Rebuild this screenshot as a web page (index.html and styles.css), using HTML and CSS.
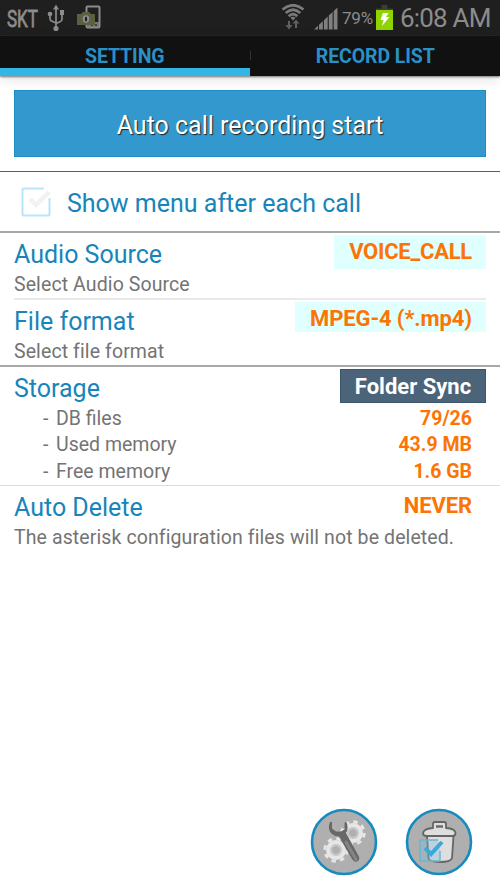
FILE: index.html
```html
<!DOCTYPE html>
<html lang="en">
<head>
    <meta charset="UTF-8">
    <meta name="viewport" content="width=device-width, initial-scale=1.0">
    <title>Call Recorder</title>
    <link rel="stylesheet" href="styles.css">
</head>
<body>

<!-- Status bar -->
<div class="status-bar">
    <span class="carrier">SKT</span>
    <svg class="usb" width="18" height="28" viewBox="0 0 18 28" fill="none" stroke="#8c8c8c" stroke-width="1.7">
        <path d="M9 4v20M3 11v3.500q0 2 2 2.800l4 1.700M15 9v6q0 2-2 2.800l-4 1.700"/>
        <path d="M9 .5l3 5H6z" fill="#8c8c8c" stroke="none"/>
        <circle cx="3" cy="10" r="2.300" fill="#8c8c8c" stroke="none"/>
        <path d="M13 6h4v5h-4z" fill="#8c8c8c" stroke="none"/>
        <circle cx="9" cy="24.500" r="2.600" fill="#8c8c8c" stroke="none"/>
    </svg>
    <svg class="capture" width="24" height="24" viewBox="0 0 24 24">
        <rect x="9.500" y="1.500" width="13" height="21" rx="1" fill="#1f1f1f" stroke="#8c8c8c" stroke-width="2"/>
        <path d="M10 17h12v5H10z" fill="#777"/>
        <path d="M14 20h2M18 20h2" stroke="#333" stroke-width="1.500"/>
        <path d="M0 9h4l2-2h6l2 2h4v11H0z" fill="#5c6041"/>
        <ellipse cx="9" cy="14" rx="3.300" ry="3.700" fill="#8f8f8f"/>
        <ellipse cx="9" cy="14" rx="1.200" ry="2.500" fill="#1f1f1f"/>
    </svg>
    <svg class="wifi" width="24" height="26" viewBox="0 0 24 26" fill="none" stroke="#7b7b7b" stroke-width="2.700">
        <path d="M1.500 5.500Q12-3 22.500 5.500M4.700 9Q12 2.500 19.300 9M7.700 12.300Q12 8 16.300 12.300"/>
        <path d="M9.500 13.800q2.500-2 5 0L12 16.500z" fill="#7b7b7b" stroke="none"/>
        <path d="M8 17v5M15 24v-6" stroke="#606060" stroke-width="2"/>
        <path d="M4.500 21h7L8 25.500zM11.500 19.500h7L15 15.500z" fill="#606060" stroke="none"/>
    </svg>
    <svg class="signal" width="24" height="23" viewBox="0 0 24 23" fill="#7f7f7f">
        <path d="M0 22.500l4-3.800v3.800zM5 17.800l3.800-3.600v8.300H5zM9.900 13.200l3.800-3.600v12.900H9.900zM14.800 8.600L18.600 5v17.500h-3.800zM19.700 4L23.500.4v22.100h-3.800z"/>
    </svg>
    <span class="percent">79%</span>
    <svg class="battery" width="17" height="25" viewBox="0 0 17 25">
        <path d="M5.500 0h6v3.500H17V25H0V3.500h5.500z" fill="#3d3d3d"/>
        <path d="M0 5h17v20H0z" fill="#8fd400"/>
        <path d="M7 8h5.500l-2.500 4h3.500L6 21l1.500-6H4.500z" fill="#fff"/>
    </svg>
    <span class="clock">6:08 AM</span>
</div>

<!-- Tabs -->
<div class="tabs">
    <div class="tab active">SETTING</div>
    <div class="tab-split"></div>
    <div class="tab">RECORD LIST</div>
</div>

<div class="start-area">
    <button class="start-button">Auto call recording start</button>
</div>

<div class="menu-row">
    <svg class="checkbox" width="30" height="30" viewBox="0 0 30 30" fill="none">
        <path d="M23 1.500H2.500q-1 0-1 1v25q0 1 1 1h25q1 0 1-1V11" stroke="#b9e6f6" stroke-width="2"/>
        <path d="M9 12l6 6L28 5" stroke="#f1f2f2" stroke-width="4.500"/>
    </svg>
    <span class="menu-label">Show menu after each call</span>
</div>

<!-- Settings -->
<div class="section audio">
    <div class="text">
        <div class="title">Audio Source</div>
        <div class="sub">Select Audio Source</div>
    </div>
    <div class="value voice">VOICE_CALL</div>
</div>
<div class="divider"></div>
<div class="section format">
    <div class="text">
        <div class="title">File format</div>
        <div class="sub">Select file format</div>
    </div>
    <div class="value mpeg">MPEG-4 (*.mp4)</div>
</div>

<div class="storage">
    <div class="storage-head">
        <div class="title">Storage</div>
        <button class="sync">Folder Sync</button>
    </div>
    <div class="info"><span class="dash">-</span><span>DB files</span><b>79/26</b></div>
    <div class="info"><span class="dash">-</span><span>Used memory</span><b>43.9 MB</b></div>
    <div class="info"><span class="dash">-</span><span>Free memory</span><b>1.6 GB</b></div>
</div>

<div class="section delete">
    <div class="text">
        <div class="title">Auto Delete</div>
        <div class="sub">The asterisk configuration files will not be deleted.</div>
    </div>
    <div class="value never">NEVER</div>
</div>

<!-- Bottom buttons -->
<div class="actions">
    <svg class="round" width="68" height="68" viewBox="0 0 68 68">
        <circle cx="34" cy="34" r="32" fill="#afafaf" stroke="#168bc0" stroke-width="2.600"/>
        <g fill="none" stroke="#e6e6e6">
            <circle cx="43" cy="25" r="7" stroke-width="6"/>
            <circle cx="43" cy="25" r="11.200" stroke-width="3" stroke-dasharray="4.400 4.400"/>
            <circle cx="26" cy="42" r="7" stroke-width="6"/>
            <circle cx="26" cy="42" r="11.200" stroke-width="3" stroke-dasharray="4.400 4.400"/>
        </g>
        <circle cx="43" cy="25" r="5" fill="none" stroke="#c5c5c5" stroke-width="2"/>
        <circle cx="26" cy="42" r="5" fill="none" stroke="#c5c5c5" stroke-width="2"/>
        <path d="M20 14q-3 8 2 12 3 2.500 7 2.500L42 51q2.500 4 5.500 2.300 3-2 1-5.500L36 25q3-4 .5-11l-2 .5v7l-3.500 2h-5l-4-3V14z" fill="#686868"/>
        <path d="M36 34l10 17.500" stroke="#858585" stroke-width="3" stroke-linecap="round"/>
    </svg>
    <svg class="round" width="68" height="68" viewBox="0 0 68 68">
        <circle cx="34" cy="34" r="32" fill="#afafaf" stroke="#168bc0" stroke-width="2.600"/>
        <path d="M22 28l1.500 22q.5 4 11.500 4t12-4l1.500-22z" fill="#dedede" stroke="#656565" stroke-width="1.800"/>
        <path d="M28 20v-4q0-2 2-2h9q2 0 2 2v4q9 .5 9.500 5 0 3-3 3h-26q-3.500 0-3.500-3 1-4.500 10-5z" fill="#dedede" stroke="#656565" stroke-width="1.800" stroke-linejoin="round"/>
        <path d="M31 18.500h7" stroke="#656565" stroke-width="2.400"/>
        <path d="M33 32H15v21h20V43" fill="#7dc1d9" fill-opacity=".35" stroke="#68b6d2" stroke-width="1.500"/>
        <path d="M20 40l6 6 11-12" fill="none" stroke="#39a9dc" stroke-width="4"/>
    </svg>
</div>

</body>
</html>
```
FILE: styles.css
```css
* {
    box-sizing: border-box;
}

body {
    font-family: Roboto, 'Liberation Sans', sans-serif;
    background-color: #fff;
    color: #747474;
    margin: 0;
    height: 889px;
    display: flex;
    flex-direction: column;
    overflow: hidden;
    white-space: nowrap;
}

button {
    font-family: inherit;
    padding: 0;
}

/* Status bar */
.status-bar {
    height: 36px;
    flex-shrink: 0;
    background-color: #1f1f1f;
    color: #8c8c8c;
    display: flex;
    align-items: center;
    padding: 0 8px 0 7px;
}

.carrier {
    font-size: 24px;
    width: 40px;
    margin-top: 2px;
    transform: scaleX(0.71);
    transform-origin: left;
    -webkit-text-stroke: 0.8px #8c8c8c;
}

.usb {
    margin-top: -1px;
}

.capture {
    margin-left: 12px;
    margin-top: -2px;
}

.wifi {
    margin-left: auto;
    margin-top: -2px;
}

.signal {
    margin-left: 9px;
    margin-right: 4px;
}

.percent {
    font-size: 17px;
    width: 34px;
    letter-spacing: -0.2px;
}

.battery {
    margin-top: -1px;
}

.clock {
    font-size: 26px;
    width: 92px;
    margin-left: 7px;
    letter-spacing: -0.8px;
}

/* Tabs */
.tabs {
    height: 40px;
    flex-shrink: 0;
    display: flex;
    background-color: #111;
    color: #2a90c6;
    font-size: 19.5px;
    font-weight: 700;
    letter-spacing: -0.1px;
    box-shadow: 0 1px 2px #777, 0 3px 12px rgba(0, 0, 0, 0.12);
}

.tab {
    flex: 1;
    text-align: center;
    line-height: 42px;
}

.tab.active {
    border-bottom: 8px solid #33b5e5;
}

.tab-split {
    width: 1px;
    height: 9px;
    margin-top: 15px;
    background-color: #333;
}

/* Start button */
.start-area {
    height: 96px;
    flex-shrink: 0;
    padding: 14px;
    border-bottom: 1px solid #5c5c5c;
}

.start-button {
    width: 472px;
    height: 67px;
    background-color: #3398cd;
    border: 1px solid #1d8dc6;
    color: #fff;
    font-size: 25px;
    padding-top: 3px;
    text-shadow: 1px 1px 1px #222;
}

.menu-row {
    height: 61px;
    flex-shrink: 0;
    display: flex;
    align-items: center;
    padding-left: 21px;
    border-bottom: 2px solid #a8a8a8;
}

.menu-label {
    font-size: 25px;
    color: #1785ba;
    margin-left: 16px;
    margin-top: 3px;
}

/* Settings */
.section {
    display: flex;
    justify-content: space-between;
    align-items: flex-start;
    padding: 0 14px;
    flex-shrink: 0;
}

.text {
    flex: 1;
    width: 0;
}

.audio {
    height: 65px;
}

.format {
    height: 67px;
    border-bottom: 2px solid #a8a8a8;
}

.title {
    font-size: 25px;
    line-height: 30px;
    color: #1785ba;
    margin-top: 7px;
}

.sub {
    font-size: 19.5px;
    line-height: 30px;
    letter-spacing: 0.1px;
}

.divider {
    height: 2px;
    flex-shrink: 0;
    margin: 0 14px;
    background-color: #eaeaea;
}

.value {
    color: #fc7404;
    font-size: 22px;
    font-weight: 700;
    padding: 0 14px;
    letter-spacing: -0.1px;
}

.voice,
.mpeg {
    background-color: #e0ffff;
    text-align: right;
}

.voice {
    width: 152px;
    height: 34px;
    line-height: 34px;
    margin-top: 2px;
    letter-spacing: -0.25px;
}

.mpeg {
    width: 191px;
    height: 30px;
    line-height: 34px;
    margin-top: 2px;
}

.storage {
    height: 119px;
    flex-shrink: 0;
    padding: 0 14px;
    border-bottom: 1px solid #dadddd;
}

.storage-head {
    height: 39px;
    display: flex;
    justify-content: space-between;
    align-items: flex-start;
}

.sync {
    width: 146px;
    height: 34px;
    margin-top: 2px;
    background-color: #4c6479;
    border: 1px solid #3b5769;
    color: #fff;
    font-size: 22px;
    font-weight: 700;
}

.info {
    display: flex;
    padding: 0 14px 0 29px;
    font-size: 19.5px;
    line-height: 26.4px;
}

.dash {
    width: 13px;
}

.info b {
    color: #fc7404;
    font-weight: 700;
    margin-left: auto;
}

.never {
    line-height: 40px;
}

/* Bottom buttons */
.actions {
    display: flex;
    justify-content: flex-end;
    gap: 27px;
    margin-top: auto;
    padding: 0 27px 13px 0;
}
```
